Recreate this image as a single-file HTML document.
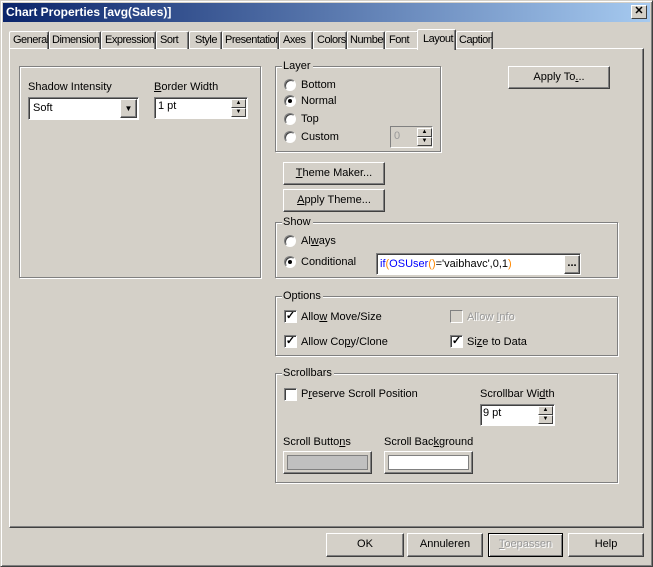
<!DOCTYPE html>
<html><head><style>
*{box-sizing:border-box;margin:0;padding:0}
body{width:653px;height:567px;background:#d4d0c8;font-family:"Liberation Sans",sans-serif;font-size:11px;color:#000;position:relative;overflow:hidden}
.a{position:absolute;white-space:nowrap}
#win{left:0;top:0;width:653px;height:567px;border:1px solid;border-color:#d4d0c8 #404040 #404040 #d4d0c8;box-shadow:inset 1px 1px 0 #fff,inset -1px -1px 0 #808080}
#title{left:3px;top:3px;width:647px;height:19px;background:linear-gradient(90deg,#0a246a,#a6caf0);color:#fff;font-weight:bold;font-size:12px;line-height:18px;padding-left:3px}
#close{left:631px;top:5px;width:16px;height:14px;background:#d4d0c8;border:1px solid;border-color:#fff #404040 #404040 #fff;font-size:11px;line-height:11px;text-align:center;font-weight:bold}
.tab{top:31px;height:18px;border:1px solid;border-color:#fff #404040 transparent #fff;border-bottom:none;border-radius:2px 2px 0 0;line-height:17px;padding-left:3px;box-shadow:inset -1px 0 0 #808080;overflow:hidden;letter-spacing:-0.5px}
.panel{left:9px;top:48px;width:635px;height:480px;border:1px solid;border-color:#fff #404040 #404040 #fff;box-shadow:inset -1px -1px 0 #808080}
.grp{border:1px solid #808080;box-shadow:1px 1px 0 #fff,inset 1px 1px 0 #fff}
.lg{position:absolute;top:-8px;left:6px;background:#d4d0c8;padding:0 2px 0 1px;line-height:14px}
.btn{border:1px solid;border-color:#fff #404040 #404040 #fff;box-shadow:inset -1px -1px 0 #808080;text-align:center;line-height:20px;background:#d4d0c8}
.sunk{background:#fff;border:1px solid;border-color:#808080 #fff #fff #808080;box-shadow:inset 1px 1px 0 #404040}
.rad{width:12px;height:12px;border-radius:50%;background:#fff;border:1px solid;border-color:#808080 #fff #fff #808080;box-shadow:inset 1px 1px 0 #404040}
.dot::after{content:"";position:absolute;left:3px;top:3px;width:4px;height:4px;border-radius:50%;background:#000}
.cb{width:13px;height:13px;background:#fff;border:1px solid;border-color:#808080 #fff #fff #808080;box-shadow:inset 1px 1px 0 #404040;font-size:11px;line-height:11px;text-align:center;font-weight:bold}
.sp{width:15px;height:9px;background:#d4d0c8;border:1px solid;border-color:#fff #404040 #404040 #fff;font-size:6px;line-height:7px;text-align:center}
u{text-decoration:underline}
</style></head><body>
<div id="win" class="a"></div>
<div id="title" class="a">Chart Properties [avg(Sales)]</div>
<div id="close" class="a">✕</div>

<div class="panel a"></div>
<div class="tab a" style="left:9px;width:40px">General</div>
<div class="tab a" style="left:49px;width:52px;padding-left:2px">Dimensions</div>
<div class="tab a" style="left:101px;width:55px;padding-left:3px">Expressions</div>
<div class="tab a" style="left:156px;width:33px">Sort</div>
<div class="tab a" style="left:189px;width:33px;padding-left:5px">Style</div>
<div class="tab a" style="left:222px;width:57px;padding-left:2px">Presentation</div>
<div class="tab a" style="left:279px;width:34px">Axes</div>
<div class="tab a" style="left:313px;width:34px;padding-left:3px">Colors</div>
<div class="tab a" style="left:347px;width:38px;padding-left:2px">Number</div>
<div class="tab a" style="left:385px;width:34px">Font</div>
<div class="tab a" style="left:417px;top:29px;height:21px;width:39px;background:#d4d0c8;z-index:2;padding-left:5px;line-height:18px">Layout</div>
<div class="tab a" style="left:456px;width:37px;padding-left:2px">Caption</div>

<div class="grp a" style="left:19px;top:66px;width:242px;height:212px"></div>
<div class="a" style="left:28px;top:81px">Shadow Intensity</div>
<div class="a sunk" style="left:28px;top:97px;width:111px;height:23px;padding:4px 0 0 4px">Soft</div>
<div class="a btn" style="left:120px;top:99px;width:17px;height:19px;font-size:8px;line-height:17px">▼</div>
<div class="a" style="left:154px;top:81px"><u>B</u>order Width</div>
<div class="a sunk" style="left:154px;top:97px;width:94px;height:22px;padding:2px 0 0 3px">1 pt</div>
<div class="a sp" style="left:231px;top:99px">▲</div>
<div class="a sp" style="left:231px;top:108px">▼</div>

<div class="grp a" style="left:275px;top:66px;width:166px;height:86px"><span class="lg">Layer</span></div>
<div class="a rad" style="left:284px;top:79px"></div><div class="a" style="left:301px;top:79px">Bottom</div>
<div class="a rad dot" style="left:284px;top:95px"></div><div class="a" style="left:301px;top:95px">Normal</div>
<div class="a rad" style="left:284px;top:113px"></div><div class="a" style="left:301px;top:113px">Top</div>
<div class="a rad" style="left:284px;top:131px"></div><div class="a" style="left:301px;top:131px">Custom</div>
<div class="a" style="left:390px;top:126px;width:43px;height:22px;border:1px solid;border-color:#808080 #fff #fff #808080;color:#999;padding:3px 3px">0</div>
<div class="a sp" style="left:417px;top:128px">▲</div>
<div class="a sp" style="left:417px;top:137px">▼</div>

<div class="a btn" style="left:508px;top:66px;width:102px;height:23px">Apply To<u>.</u>..</div>
<div class="a btn" style="left:283px;top:162px;width:102px;height:23px"><u>T</u>heme Maker...</div>
<div class="a btn" style="left:283px;top:189px;width:102px;height:23px"><u>A</u>pply Theme...</div>

<div class="grp a" style="left:275px;top:222px;width:343px;height:56px"><span class="lg">Show</span></div>
<div class="a rad" style="left:284px;top:235px"></div><div class="a" style="left:301px;top:235px">Al<u>w</u>ays</div>
<div class="a rad dot" style="left:284px;top:256px"></div><div class="a" style="left:301px;top:256px">Conditional</div>
<div class="a sunk" style="left:376px;top:253px;width:205px;height:22px;padding:4px 0 0 3px"><span style="color:#00f">if</span><span style="color:#f80">(</span><span style="color:#00f">OSUser</span><span style="color:#f80">()</span>='vaibhavc',0,1<span style="color:#f80">)</span></div>
<div class="a btn" style="left:564px;top:255px;width:16px;height:19px;line-height:14px;font-weight:bold">...</div>

<div class="grp a" style="left:275px;top:296px;width:343px;height:60px"><span class="lg">Options</span></div>
<div class="a cb" style="left:284px;top:310px">✓</div><div class="a" style="left:301px;top:311px">Allo<u>w</u> Move/Size</div>
<div class="a cb" style="left:284px;top:335px">✓</div><div class="a" style="left:301px;top:336px">Allow Co<u>p</u>y/Clone</div>
<div class="a" style="left:450px;top:310px;width:13px;height:13px;border:1px solid;border-color:#808080 #fff #fff #808080"></div><div class="a" style="left:467px;top:311px;color:#999;text-shadow:1px 1px 0 #fff">Allow <u>I</u>nfo</div>
<div class="a cb" style="left:450px;top:335px">✓</div><div class="a" style="left:467px;top:336px">Si<u>z</u>e to Data</div>

<div class="grp a" style="left:275px;top:373px;width:343px;height:110px"><span class="lg">Scrollbars</span></div>
<div class="a cb" style="left:284px;top:388px"></div><div class="a" style="left:301px;top:388px">P<u>r</u>eserve Scroll Position</div>
<div class="a" style="left:480px;top:388px">Scrollbar Wi<u>d</u>th</div>
<div class="a sunk" style="left:480px;top:404px;width:75px;height:22px;padding:2px 0 0 2px">9 pt</div>
<div class="a sp" style="left:538px;top:406px">▲</div>
<div class="a sp" style="left:538px;top:415px">▼</div>
<div class="a" style="left:283px;top:436px">Scroll Butto<u>n</u>s</div>
<div class="a btn" style="left:283px;top:451px;width:89px;height:23px;padding:3px"><div style="width:100%;height:100%;background:#c0c0c0;border:1px solid #808080"></div></div>
<div class="a" style="left:384px;top:436px">Scroll Bac<u>k</u>ground</div>
<div class="a btn" style="left:384px;top:451px;width:89px;height:23px;padding:3px"><div style="width:100%;height:100%;background:#fff;border:1px solid #808080"></div></div>

<div class="a btn" style="left:326px;top:533px;width:78px;height:24px">OK</div>
<div class="a btn" style="left:407px;top:533px;width:76px;height:24px">Annuleren</div>
<div class="a btn" style="left:488px;top:533px;width:75px;height:24px;border:1px solid #000;box-shadow:inset 1px 1px 0 #fff,inset -1px -1px 0 #808080;color:#999;text-shadow:1px 1px 0 #fff"><u>T</u>oepassen</div>
<div class="a btn" style="left:568px;top:533px;width:76px;height:24px">Help</div>
</body></html>
